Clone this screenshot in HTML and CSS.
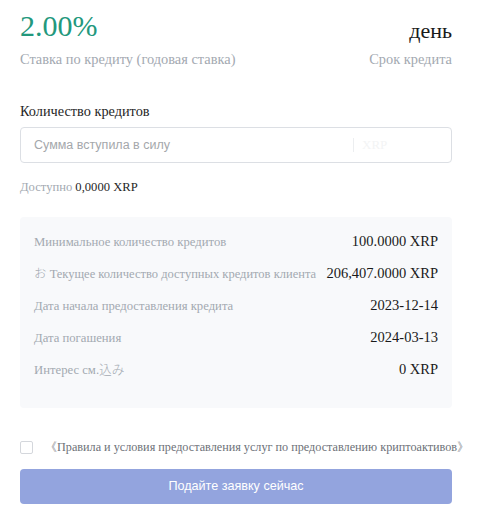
FILE: index.html
```html
<!DOCTYPE html>
<html lang="ru">
<head>
    <meta charset="UTF-8">
    <meta name="viewport" content="width=device-width, initial-scale=1.0">
    <title>Кредит</title>
    <link rel="stylesheet" href="styles.css">
</head>
<body>
    <div class="page">
        <div class="top">
            <div class="top_left">
                <div class="rate">2.00%</div>
                <div class="sub">Ставка по кредиту (годовая ставка)</div>
            </div>
            <div class="top_right">
                <div class="days">день</div>
                <div class="sub">Срок кредита</div>
            </div>
        </div>

        <div class="label">Количество кредитов</div>
        <div class="inp">
            <input type="text" placeholder="Сумма вступила в силу">
            <span class="inp_line"></span>
            <span class="inp_unit">XRP</span>
        </div>
        <div class="avail"><span>Доступно</span> 0,0000 XRP</div>

        <div class="info">
            <div class="row"><span class="k">Минимальное количество кредитов</span><span class="v">100.0000 XRP</span></div>
            <div class="row"><span class="k k_long"><i class="jp">お</i> Текущее количество доступных кредитов клиента</span><span class="v">206,407.0000 XRP</span></div>
            <div class="row"><span class="k">Дата начала предоставления кредита</span><span class="v">2023-12-14</span></div>
            <div class="row"><span class="k">Дата погашения</span><span class="v">2024-03-13</span></div>
            <div class="row"><span class="k">Интерес см.<i class="jp">込み</i></span><span class="v">0 XRP</span></div>
        </div>

        <div class="agree">
            <span class="chk"></span>
            <span class="agree_txt">《Правила и условия предоставления услуг по предоставлению криптоактивов》</span>
        </div>
        <div class="btn">Подайте заявку сейчас</div>
    </div>
</body>
</html>
```

FILE: styles.css
```css
*{
    margin: 0;
    padding: 0;
    box-sizing: border-box;
}
body{
    background: #fff;
    font-family: "Liberation Serif", "Noto Serif", "DejaVu Serif", serif;
    color: #1f1f1f;
    overflow: hidden;
}
.jp{
    font-style: normal;
    font-family: "Noto Sans CJK JP", sans-serif;
    font-weight: 300;
}
.page{
    padding: 8px 25px 0 20px;
}
.top{
    display: flex;
    justify-content: space-between;
    align-items: flex-end;
}
.rate{
    font-size: 30px;
    line-height: 36px;
    color: #23987d;
}
.sub{
    margin-top: 5px;
    font-size: 14.4px;
    line-height: 20px;
    color: #a3a9b1;
}
.top_right{
    text-align: right;
}
.days{
    font-size: 22px;
    line-height: 26px;
    color: #1a1a1a;
}
.label{
    margin-top: 32px;
    font-size: 14.3px;
    line-height: 21px;
    color: #262626;
}
.inp{
    margin-top: 5px;
    height: 36px;
    border: 1px solid #dcdfe4;
    border-radius: 4px;
    display: flex;
    align-items: center;
    padding: 0 14px 0 13px;
}
.inp input{
    flex: 1;
    min-width: 0;
    border: none;
    outline: none;
    background: none;
    font-family: "Liberation Sans", Arial, sans-serif;
    font-size: 12.5px;
}
.inp input::placeholder{
    color: #a4a7ab;
}
.inp_line{
    width: 1px;
    height: 14px;
    background: #eceef0;
    margin-right: 8px;
}
.inp_unit{
    width: 75px;
    font-size: 13px;
    color: #f3f4f5;
}
.avail{
    margin-top: 16px;
    font-size: 12.6px;
    line-height: 17px;
}
.avail span{
    color: #a3a9b1;
}
.info{
    margin-top: 21px;
    background: #f8f9fb;
    border-radius: 4px;
    padding: 8px 14px 23px;
}
.row{
    display: flex;
    justify-content: space-between;
    align-items: baseline;
    height: 32px;
    line-height: 32px;
    white-space: nowrap;
}
.k{
    font-size: 12.7px;
    color: #a3a9b1;
}
.k_long{
    font-size: 12.5px;
}
.v{
    font-size: 14.5px;
    color: #1a1a1a;
}
.agree{
    margin-top: 29px;
    margin-right: -25px;
    display: flex;
    align-items: center;
    white-space: nowrap;
    height: 20px;
}
.chk{
    width: 13px;
    height: 13px;
    border: 1px solid #d4d7dc;
    border-radius: 2px;
    margin-right: 12px;
    flex-shrink: 0;
}
.agree_txt{
    font-size: 12.2px;
    color: #6d7178;
}
.btn{
    margin-top: 12px;
    height: 35px;
    line-height: 35px;
    background: #93a4de;
    border-radius: 4px;
    text-align: center;
    color: #fff;
    font-family: "Liberation Sans", Arial, sans-serif;
    font-size: 12.6px;
}
```
